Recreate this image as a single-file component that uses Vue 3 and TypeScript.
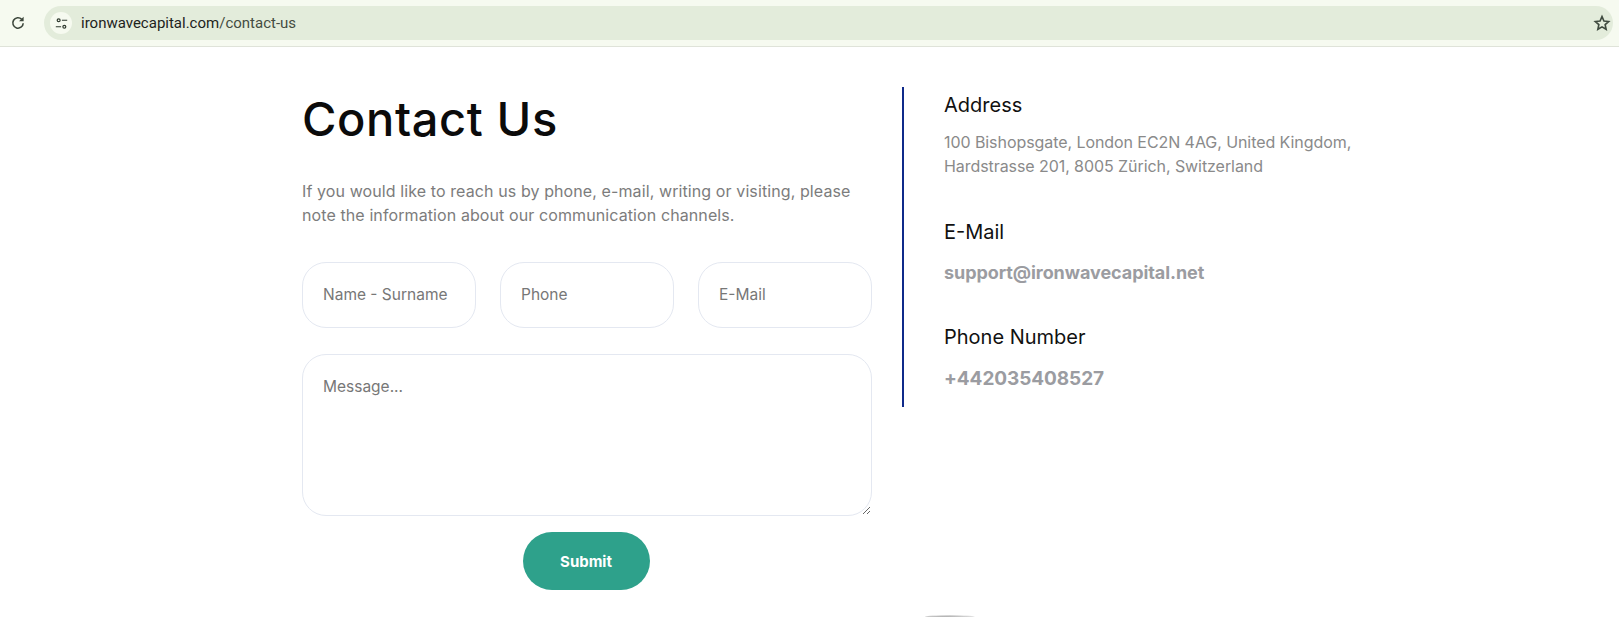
<script setup lang="ts">
interface ContactBlock {
  title: string
  lines: string[]
  kind: 'text' | 'mail' | 'phone'
}

const blocks: ContactBlock[] = [
  {
    title: 'Address',
    lines: ['100 Bishopsgate, London EC2N 4AG, United Kingdom,', 'Hardstrasse 201, 8005 Zürich, Switzerland'],
    kind: 'text'
  },
  { title: 'E-Mail', lines: ['support@ironwavecapital.net'], kind: 'mail' },
  { title: 'Phone Number', lines: ['+442035408527'], kind: 'phone' }
]
</script>

<template>
  <div class="page">
    <header class="toolbar">
      <svg class="reload" viewBox="0 0 16 16" fill="none">
        <path d="M13.2 8.200a5.200 5.200 0 1 1-1.500-3.900" stroke="#3c463b" stroke-width="1.600" />
        <path d="M13.600 1.700v4.600H9z" fill="#3c463b" />
      </svg>
      <div class="omnibox">
        <span class="tune">
          <svg viewBox="0 0 16 16" fill="none" stroke="#2f3a2f" stroke-width="1.500">
            <circle cx="4.500" cy="4" r="1.800" />
            <path d="M8.500 4H15M1 12h6.500" />
            <circle cx="11.500" cy="12" r="1.800" />
          </svg>
        </span>
        <span class="url"><span class="host">ironwavecapital.com</span>/contact-us</span>
        <svg class="star" viewBox="0 0 24 24" fill="none" stroke="#3f4a3f" stroke-width="2.200">
          <path d="M12 3.500l2.600 5.800 6.300.7-4.700 4.200 1.300 6.200-5.500-3.200-5.500 3.200 1.300-6.200L3.100 10l6.300-.7z" />
        </svg>
      </div>
    </header>

    <main class="content">
      <section class="form-col">
        <h1>Contact Us</h1>
        <p class="intro">
          If you would like to reach us by phone, e-mail, writing or visiting, please<br />
          note the information about our communication channels.
        </p>
        <form class="form" @submit.prevent>
          <div class="row">
            <input type="text" placeholder="Name - Surname" />
            <input type="text" placeholder="Phone" />
            <input type="text" placeholder="E-Mail" />
          </div>
          <textarea placeholder="Message..."></textarea>
          <button type="submit">Submit</button>
        </form>
      </section>

      <aside class="info-col">
        <div v-for="block in blocks" :key="block.title" class="block" :class="block.kind">
          <h3>{{ block.title }}</h3>
          <p v-for="line in block.lines" :key="line">{{ line }}</p>
        </div>
      </aside>
    </main>

    <div class="arc"></div>
  </div>
</template>

<style>
html,
body {
  margin: 0;
  background: #fff;
  overflow: hidden;
}
</style>

<style scoped>
.page {
  position: relative;
  width: 1619px;
  height: 617px;
  overflow: hidden;
  font-family: Inter, 'Liberation Sans', sans-serif;
}

.toolbar {
  height: 47px;
  box-sizing: border-box;
  display: flex;
  align-items: flex-start;
  background: #f6faf0;
  border-bottom: 1px solid #dfe3d9;
  padding: 6px 6px 0 10px;
}

.reload {
  width: 16px;
  height: 16px;
  margin-top: 9px;
}

.omnibox {
  margin-left: 18px;
  flex: 1;
  height: 34px;
  display: flex;
  align-items: center;
  background: #e3ecdb;
  border-radius: 17px;
  padding: 0 2px 0 6px;
}

.tune {
  width: 22px;
  height: 22px;
  border-radius: 50%;
  background: #f6faf0;
  display: flex;
  align-items: center;
  justify-content: center;
}

.tune svg {
  width: 13px;
  height: 13px;
}

.url {
  margin-left: 9px;
  font-family: Roboto, 'Liberation Sans', sans-serif;
  font-size: 15px;
  color: #444c42;
}

.host {
  color: #1d231c;
}

.star {
  margin-left: auto;
  width: 18px;
  height: 18px;
}

.content {
  display: flex;
  padding: 40px 0 0 302px;
}

.form-col {
  width: 570px;
}

h1 {
  margin: 2px 0 0;
  font-size: 47px;
  line-height: 60px;
  font-weight: 500;
  letter-spacing: 0.6px;
  color: #0b0b0b;
}

.intro {
  margin: 30px 0 0;
  font-size: 16px;
  line-height: 24px;
  letter-spacing: 0.1px;
  color: #7c7c7c;
}

.form {
  margin-top: 35px;
  display: flex;
  flex-direction: column;
}

.row {
  display: grid;
  grid-template-columns: repeat(3, 1fr);
  gap: 24px;
}

input,
textarea {
  box-sizing: border-box;
  width: 100%;
  border: 1px solid #e4e8f1;
  background: #fff;
  font-family: inherit;
  font-size: 15.5px;
  color: #333;
  outline: none;
}

input::placeholder,
textarea::placeholder {
  color: #777;
  opacity: 1;
}

input {
  height: 66px;
  border-radius: 24px;
  padding: 0 20px 2px;
}

textarea {
  display: block;
  margin-top: 26px;
  height: 162px;
  border-radius: 24px;
  padding: 22px 20px;
  resize: vertical;
}

button {
  align-self: center;
  margin-top: 16px;
  margin-right: 2px;
  width: 127px;
  height: 58px;
  border: 0;
  border-radius: 29px;
  background: #2ea18b;
  color: #fff;
  font-family: inherit;
  font-size: 15px;
  font-weight: 700;
}

.info-col {
  margin-left: 30px;
  width: 500px;
  height: 320px;
  box-sizing: border-box;
  border-left: 2px solid #0f2a8a;
  padding-left: 40px;
}

.block {
  margin-bottom: 42px;
}

.block h3 {
  margin: 6px 0 13px;
  font-size: 20px;
  line-height: 24px;
  font-weight: 400;
  color: #111;
}

.block p {
  margin: 0;
  font-size: 16px;
  line-height: 24px;
  letter-spacing: -0.07px;
  color: #8a8a8a;
}

.block.mail {
  margin-bottom: 40px;
}

.block.mail h3 {
  margin-bottom: 17px;
}

.block.phone h3 {
  margin-bottom: 18px;
}

.block.mail p {
  font-size: 18px;
  font-weight: 700;
  color: #9b9ca1;
}

.block.phone p {
  font-size: 19px;
  font-weight: 700;
  color: #9b9ca1;
}

.arc {
  position: absolute;
  left: 925px;
  top: 615px;
  width: 50px;
  height: 4px;
  border-radius: 50%;
  background: radial-gradient(ellipse at 40% 50%, #a8a8a8 0%, #d4d4d4 55%, transparent 100%);
}
</style>
